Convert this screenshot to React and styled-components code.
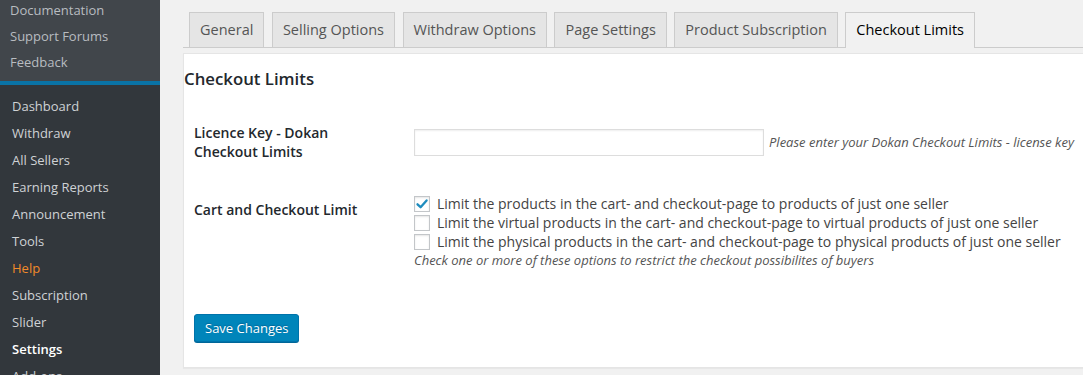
import React from "react";
import styled, { createGlobalStyle } from "styled-components";

const Global = createGlobalStyle`
  html, body { margin: 0; padding: 0; height: 375px; overflow: hidden; background: #f1f1f1; }
  body { font-family: "Open Sans", "Noto Sans", sans-serif; color: #444; font-size: 13px; }
  * { box-sizing: border-box; }
`;

const Layout = styled.div`
  display: flex;
  height: 375px;
`;

const Sidebar = styled.nav`
  width: 160px;
  flex: 0 0 160px;
  background: #32373c;
  overflow: hidden;
  display: flex;
  flex-direction: column;
`;

const Submenu = styled.ul`
  list-style: none;
  margin: -3px 0 0;
  padding: 0 0 6px;
  background: #41464b;
  border-bottom: 4px solid #0a73a6;
`;

const SubItem = styled.li`
  padding-left: 10px;
  font-size: 13px;
  line-height: 26px;
  color: #b8bcc0;
`;

const Menu = styled.ul`
  list-style: none;
  margin: 0;
  padding: 8px 0 0;
`;

const MenuItem = styled.li`
  padding-left: 12px;
  font-size: 13px;
  line-height: 27px;
  color: ${(p) => (p.$active ? "#fff" : p.$highlight ? "#f18a2a" : "#cfd2d5")};
  font-weight: ${(p) => (p.$active ? 600 : 400)};
`;

const Main = styled.main`
  flex: 1;
  min-width: 0;
  padding-left: 23px;
  display: flex;
  flex-direction: column;
`;

const TabBar = styled.div`
  display: flex;
  gap: 7.5px;
  padding: 12px 0 0 6px;
  border-bottom: 1px solid #ccc;
  margin-right: -2px;
`;

const Tab = styled.a`
  display: block;
  padding: 5px 10px;
  font-size: 14.5px;
  line-height: 24px;
  border: 1px solid #ccc;
  border-bottom: none;
  background: ${(p) => (p.$active ? "#f1f1f1" : "#e5e5e5")};
  color: ${(p) => (p.$active ? "#000" : "#555")};
  margin-bottom: ${(p) => (p.$active ? "-1px" : "0")};
  padding-bottom: ${(p) => (p.$active ? "6px" : "5px")};
  white-space: nowrap;
`;

const Panel = styled.section`
  margin: 5px -2px 0 0;
  background: #fff;
  border: 1px solid #e5e5e5;
  box-shadow: 0 1px 1px rgba(0, 0, 0, 0.04);
  padding-bottom: 25px;
`;

const Heading = styled.h2`
  margin: 0;
  padding-top: 13px;
  font-size: 16.8px;
  line-height: 24px;
  font-weight: 600;
  color: #23282d;
`;

const Form = styled.div`
  padding: 13px 0 0 10px;
`;

const Row = styled.div`
  display: grid;
  grid-template-columns: 210px 1fr;
`;

const Label = styled.div`
  width: 200px;
  padding: 20px 10px 20px 0;
  font-size: 14px;
  line-height: 18.5px;
  font-weight: 600;
  color: #23282d;
`;

const Field = styled.div`
  padding: ${(p) => (p.$top ? "13px 10px 15px" : "15px 10px")};
  display: flex;
  flex-direction: column;
  justify-content: ${(p) => (p.$top ? "flex-start" : "center")};
`;

const InlineField = styled.div`
  display: flex;
  align-items: center;
  gap: 5px;
`;

const TextInput = styled.input`
  width: 350px;
  height: 27px;
  margin: -1px 0 0;
  border: 1px solid #ddd;
  box-shadow: inset 0 1px 2px rgba(0, 0, 0, 0.07);
  background: #fff;
  font-family: inherit;
  font-size: 14px;
  padding: 3px 5px;
  outline: none;
`;

const Description = styled.span`
  font-size: 13px;
  font-style: italic;
  color: #555;
  line-height: 19px;
  white-space: nowrap;
`;

const CheckRow = styled.label`
  display: flex;
  align-items: center;
  gap: 7px;
  font-size: 14px;
  line-height: 19px;
  color: #444;
`;

const Box = styled.span`
  width: 16px;
  height: 16px;
  flex: 0 0 16px;
  border: 1px solid #c3c6c9;
  background: #fff;
  box-shadow: inset 0 1px 2px rgba(0, 0, 0, 0.1);
  display: flex;
  align-items: center;
  justify-content: center;
`;

const SubmitArea = styled.div`
  padding: 29px 0 0 10px;
`;

const Button = styled.button`
  height: 28px;
  padding: 0 10px;
  border: 1px solid #0073aa;
  border-radius: 3px;
  background: #0085ba;
  box-shadow: 0 1px 0 #006799;
  color: #fff;
  font-family: inherit;
  font-size: 13px;
  line-height: 26px;
  text-shadow: 0 -1px 1px #006799;
  cursor: pointer;
`;

const Check = ({ checked, children }) => (
  <CheckRow>
    <Box>
      {checked && (
        <svg width="14" height="14" viewBox="0 0 14 14">
          <path d="M2.5 7.3 L5.6 10.2 L11.6 3.4" fill="none" stroke="#1e8cbe" strokeWidth="2.3" strokeLinecap="round" strokeLinejoin="round" />
        </svg>
      )}
    </Box>
    {children}
  </CheckRow>
);

const subItems = ["Documentation", "Support Forums", "Feedback"];
const menuItems = ["Dashboard", "Withdraw", "All Sellers", "Earning Reports", "Announcement", "Tools", "Help", "Subscription", "Slider", "Settings", "Add-ons"];
const tabs = ["General", "Selling Options", "Withdraw Options", "Page Settings", "Product Subscription", "Checkout Limits"];

export default function App() {
  return (
    <>
      <Global />
      <Layout>
        <Sidebar>
          <Submenu>
            {subItems.map((s) => (
              <SubItem key={s}>{s}</SubItem>
            ))}
          </Submenu>
          <Menu>
            {menuItems.map((m) => (
              <MenuItem key={m} $active={m === "Settings"} $highlight={m === "Help"}>
                {m}
              </MenuItem>
            ))}
          </Menu>
        </Sidebar>
        <Main>
          <TabBar>
            {tabs.map((t) => (
              <Tab key={t} $active={t === "Checkout Limits"}>
                {t}
              </Tab>
            ))}
          </TabBar>
          <Panel>
            <Heading>Checkout Limits</Heading>
            <Form>
              <Row>
                <Label>Licence Key - Dokan Checkout Limits</Label>
                <Field>
                  <InlineField>
                    <TextInput type="text" />
                    <Description>Please enter your Dokan Checkout Limits - license key</Description>
                  </InlineField>
                </Field>
              </Row>
              <Row>
                <Label>Cart and Checkout Limit</Label>
                <Field $top>
                  <Check checked>Limit the products in the cart- and checkout-page to products of just one seller</Check>
                  <Check>Limit the virtual products in the cart- and checkout-page to virtual products of just one seller</Check>
                  <Check>Limit the physical products in the cart- and checkout-page to physical products of just one seller</Check>
                  <Description>Check one or more of these options to restrict the checkout possibilites of buyers</Description>
                </Field>
              </Row>
            </Form>
            <SubmitArea>
              <Button>Save Changes</Button>
            </SubmitArea>
          </Panel>
        </Main>
      </Layout>
    </>
  );
}
